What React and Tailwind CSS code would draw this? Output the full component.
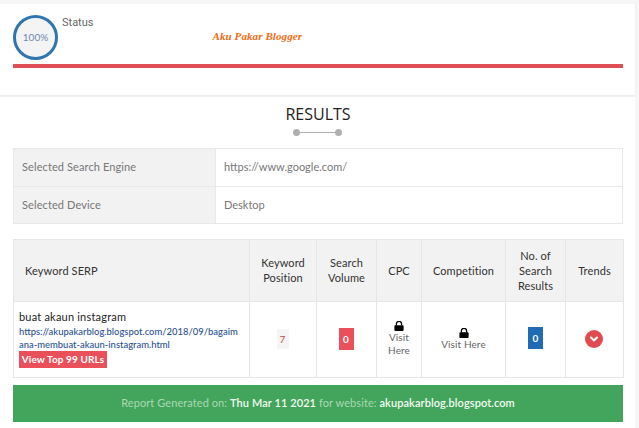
import React from 'react';

const LockIcon = () => (
  <svg viewBox="0 0 10 10" className="w-[10px] h-[10px] mx-auto block">
    <path d="M2.4 4.5V3a2.6 2.6 0 0 1 5.2 0v1.5" fill="none" stroke="#000" strokeWidth="1.3" />
    <rect x="0.4" y="4.2" width="9.2" height="5.8" rx="0.8" fill="#000" />
  </svg>
);

const headers = [
  { label: ['Keyword SERP'], width: 'w-[236px]', left: true },
  { label: ['Keyword', 'Position'], width: 'w-[67px]' },
  { label: ['Search', 'Volume'], width: 'w-[60px]' },
  { label: ['CPC'], width: 'w-[45px]' },
  { label: ['Competition'], width: 'w-[84px]' },
  { label: ['No. of', 'Search', 'Results'], width: 'w-[60px]' },
  { label: ['Trends'], width: 'w-[58px]' },
];

const App = () => {
  return (
    <div className="w-[639px] h-[428px] overflow-hidden bg-[#f6f6f6] font-['Lato','Open_Sans',sans-serif] text-[11px] pt-[4px] pr-[4px] flex flex-col gap-[2px]">
      {/* Status card */}
      <div className="h-[91px] shrink-0 bg-white px-[13px] pt-[11px] pr-[12px] shadow-[0_1px_3px_rgba(0,0,0,0.06)]">
        <div className="flex items-start h-[50px]">
          <div className="w-[45px] h-[45px] shrink-0 rounded-full border-[3px] border-[#2f76b0] bg-[#f4f4f4] flex items-center justify-center text-[10px] text-[#6f88b0]">
            100%
          </div>
          <span className="ml-[4px] text-[#666] font-['Roboto',sans-serif] text-[11px] leading-[13px] mt-[1px]">Status</span>
          <span className="ml-[119px] mt-[15px] font-['Liberation_Serif',serif] italic font-bold text-[#f26b12] text-[11px] leading-[13px] tracking-[0.1px]">
            Aku Pakar Blogger
          </span>
        </div>
        <div className="h-[4px] mt-[-1px] bg-[#df4f55]" />
      </div>

      {/* Results */}
      <div className="flex-1 bg-white pl-[13px] pr-[12px]">
        <h2 className="text-center text-[16px] leading-[20px] mt-[7px] text-[#222] font-['Open_Sans',sans-serif]">RESULTS</h2>
        <div className="flex items-center justify-center mt-[3px] h-[10px] pr-[1px]">
          <span className="w-[7px] h-[7px] rounded-full bg-[#b0b0b0]" />
          <span className="w-[35px] h-px bg-[#b0b0b0]" />
          <span className="w-[7px] h-[7px] rounded-full bg-[#b0b0b0]" />
        </div>

        <table className="w-full mt-[11px] border-collapse table-fixed text-[#777]">
          <tbody>
            <tr className="h-[38px]">
              <td className="w-[202px] px-[8px] bg-[#f2f2f2] border border-[#e8e8e8] tracking-[0.1px]">Selected Search Engine</td>
              <td className="px-[8px] border border-[#e8e8e8]">https://www.google.com/</td>
            </tr>
            <tr className="h-[37px]">
              <td className="px-[8px] bg-[#f2f2f2] border border-[#e8e8e8] tracking-[0.1px]">Selected Device</td>
              <td className="px-[8px] border border-[#e8e8e8]">Desktop</td>
            </tr>
          </tbody>
        </table>

        <table className="w-full mt-[15px] border-collapse table-fixed text-[#444] tracking-[0.1px]">
          <thead>
            <tr className="h-[62px] bg-[#f2f2f2]">
              {headers.map((h) => (
                <th
                  key={h.label[0]}
                  className={`${h.width} border border-[#e6e6e6] font-normal leading-[15px] text-[#333] pb-[1px] ${h.left ? 'text-left pl-[11px]' : 'text-center'}`}
                >
                  {h.label.map((line) => (
                    <div key={line}>{line}</div>
                  ))}
                </th>
              ))}
            </tr>
          </thead>
          <tbody>
            <tr className="h-[76px]">
              <td className="border border-[#e6e6e6] pl-[5px] pr-[7px] pb-[2px] align-middle">
                <div className="text-[#222] leading-[14px] tracking-[0.2px]">buat akaun instagram</div>
                <div className="mt-[1px] text-[#2a5293] font-medium text-[9.45px] leading-[13px] tracking-normal break-all">
                  https://akupakarblog.blogspot.com/2018/09/bagaimana-membuat-akaun-instagram.html
                </div>
                <span className="block w-[88px] h-[17px] bg-[#e9505a] text-white font-bold text-[10px] leading-[17px] text-center">
                  View Top 99 URLs
                </span>
              </td>
              <td className="border border-[#e6e6e6] pr-[1px] pb-[2px] text-center align-middle">
                <span className="inline-block w-[12px] h-[20px] leading-[20px] bg-[#f5f5f5] text-[#c9474e] text-[10px]">7</span>
              </td>
              <td className="border border-[#e6e6e6] pr-[1px] pb-[2px] text-center align-middle">
                <span className="inline-block w-[15px] h-[22px] leading-[22px] bg-[#e9505a] text-white font-bold text-[10px]">0</span>
              </td>
              <td className="border border-[#e6e6e6] pb-[2px] text-center align-middle text-[10px] leading-[13px] text-[#666]">
                <LockIcon />
                Visit
                <br />
                Here
              </td>
              <td className="border border-[#e6e6e6] pb-[2px] text-center align-middle text-[10px] leading-[12px] text-[#666]">
                <LockIcon />
                Visit Here
              </td>
              <td className="border border-[#e6e6e6] pb-[4px] text-center align-middle">
                <span className="inline-block w-[15px] h-[22px] leading-[22px] bg-[#1f6cb5] text-white font-bold text-[10px]">0</span>
              </td>
              <td className="border border-[#e6e6e6] pr-[1px] pb-[2px] align-middle">
                <div className="w-[18px] h-[18px] mx-auto rounded-full bg-[#e04b4f] flex items-center justify-center">
                  <svg viewBox="0 0 10 10" className="w-[10px] h-[10px]">
                    <path d="M2 3.5 L5 6.5 L8 3.5" fill="none" stroke="#fff" strokeWidth="2" strokeLinecap="round" strokeLinejoin="round" />
                  </svg>
                </div>
              </td>
            </tr>
          </tbody>
        </table>

        <div className="mt-[7px] h-[37px] bg-[#43a45b] flex items-center justify-center text-[#a9d9b5] text-[11px] tracking-[0.08px]">
          <span>
            Report Generated on: <b className="font-semibold text-[#f2fbf4]">Thu Mar 11 2021</b> for website:{' '}
            <b className="font-semibold text-[#f2fbf4]">akupakarblog.blogspot.com</b>
          </span>
        </div>
      </div>
    </div>
  );
};

export default App;
